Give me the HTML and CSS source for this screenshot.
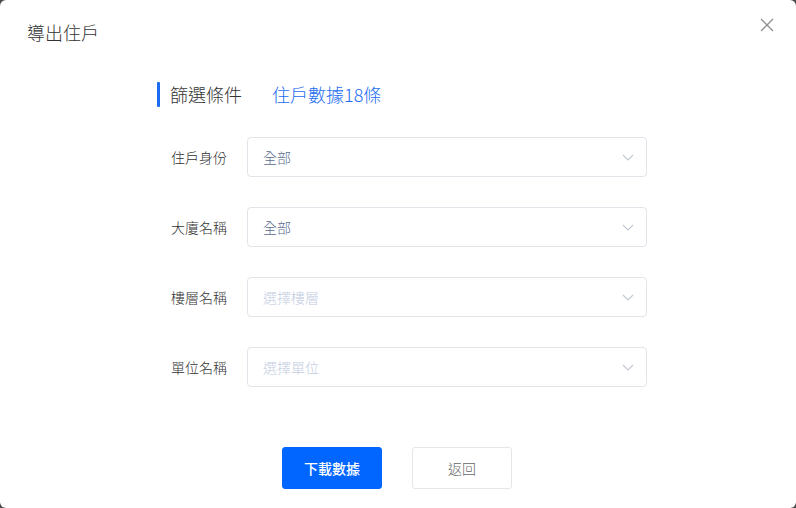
FILE: index.html
```html
<!DOCTYPE html>
<html lang="zh-Hant">
<head>
<meta charset="utf-8">
<link rel="stylesheet" href="styles.css">
</head>
<body>
<div class="modal">
  <div class="modal-header">
    <span class="modal-title">導出住戶</span>
    <span class="close" aria-label="close">
      <svg width="14" height="14" viewBox="0 0 14 14"><path d="M1 1L13 13M13 1L1 13" stroke="#909090" stroke-width="1.3" fill="none"/></svg>
    </span>
  </div>
  <div class="content">
    <div class="section-head">
      <span class="bar"></span>
      <span class="sec-title">篩選條件</span>
      <span class="sec-count">住戶數據18條</span>
    </div>
    <div class="form">
      <div class="row">
        <label class="label">住戶身份</label>
        <div class="select"><span class="value">全部</span><svg class="chev" width="12" height="7" viewBox="0 0 12 7"><path d="M1 1L6 6L11 1" stroke="#c3c8d4" stroke-width="1.1" fill="none"/></svg></div>
      </div>
      <div class="row">
        <label class="label">大廈名稱</label>
        <div class="select"><span class="value">全部</span><svg class="chev" width="12" height="7" viewBox="0 0 12 7"><path d="M1 1L6 6L11 1" stroke="#c3c8d4" stroke-width="1.1" fill="none"/></svg></div>
      </div>
      <div class="row">
        <label class="label">樓層名稱</label>
        <div class="select"><span class="placeholder">選擇樓層</span><svg class="chev" width="12" height="7" viewBox="0 0 12 7"><path d="M1 1L6 6L11 1" stroke="#c3c8d4" stroke-width="1.1" fill="none"/></svg></div>
      </div>
      <div class="row">
        <label class="label">單位名稱</label>
        <div class="select"><span class="placeholder">選擇單位</span><svg class="chev" width="12" height="7" viewBox="0 0 12 7"><path d="M1 1L6 6L11 1" stroke="#c3c8d4" stroke-width="1.1" fill="none"/></svg></div>
      </div>
    </div>
    <div class="actions">
      <button class="btn btn-primary">下載數據</button>
      <button class="btn btn-default">返回</button>
    </div>
  </div>
</div>
</body>
</html>
```
FILE: styles.css
```css
* { box-sizing: border-box; }
html, body { margin: 0; padding: 0; }
body {
  width: 796px;
  height: 508px;
  background: #4a4a4a;
  font-family: "Noto Sans CJK TC", "Noto Sans", sans-serif;
  font-weight: 300;
  overflow: hidden;
}
.modal {
  width: 796px;
  height: 508px;
  background: #fff;
  border-radius: 6px;
  position: relative;
}
.modal-header {
  height: 64px;
  padding: 21px 26px 0 27px;
}
.modal-title {
  font-size: 18px;
  line-height: 22px;
  color: #333;
  display: block;
}
.close {
  position: absolute;
  right: 22px;
  top: 18px;
  width: 14px;
  height: 14px;
  display: block;
}
.close svg { display: block; }
.content {
  padding: 18px 0 0 0;
}
.section-head {
  display: flex;
  align-items: center;
  padding-left: 157px;
  height: 25px;
}
.bar {
  width: 3px;
  height: 25px;
  background: #1b6cf2;
  border-radius: 1px;
  margin-right: 10px;
}
.sec-title {
  font-size: 18px;
  color: #333;
  line-height: 25px;
  margin-right: 30px;
}
.sec-count {
  font-size: 18px;
  color: #1b6cf2;
  line-height: 25px;
}
.form {
  padding-left: 157px;
  margin-top: 30px;
  display: flex;
  flex-direction: column;
  gap: 30px;
}
.row {
  display: grid;
  grid-template-columns: 70px 400px;
  column-gap: 20px;
  align-items: center;
}
.label {
  text-align: right;
  font-size: 14px;
  color: #333;
}
.select {
  height: 40px;
  border: 1px solid #e2e4ea;
  border-radius: 4px;
  display: flex;
  align-items: center;
  justify-content: space-between;
  padding: 0 12px 0 15px;
  font-size: 14px;
}
.value { color: #5a6a8c; }
.placeholder { color: #c2cbe0; }
.chev { display: block; }
.actions {
  display: flex;
  justify-content: center;
  gap: 30px;
  margin-top: 60px;
  padding-right: 2px;
}
.btn {
  width: 100px;
  height: 42px;
  border-radius: 3px;
  font-family: "Noto Sans CJK TC", "Noto Sans", sans-serif;
  font-size: 14px;
  cursor: pointer;
}
.btn-primary {
  background: #0066ff;
  border: 1px solid #0066ff;
  color: #fff;
  font-weight: 500;
}
.btn-default {
  background: #fff;
  border: 1px solid #e6e6e6;
  color: #666;
  font-weight: 300;
}
```
